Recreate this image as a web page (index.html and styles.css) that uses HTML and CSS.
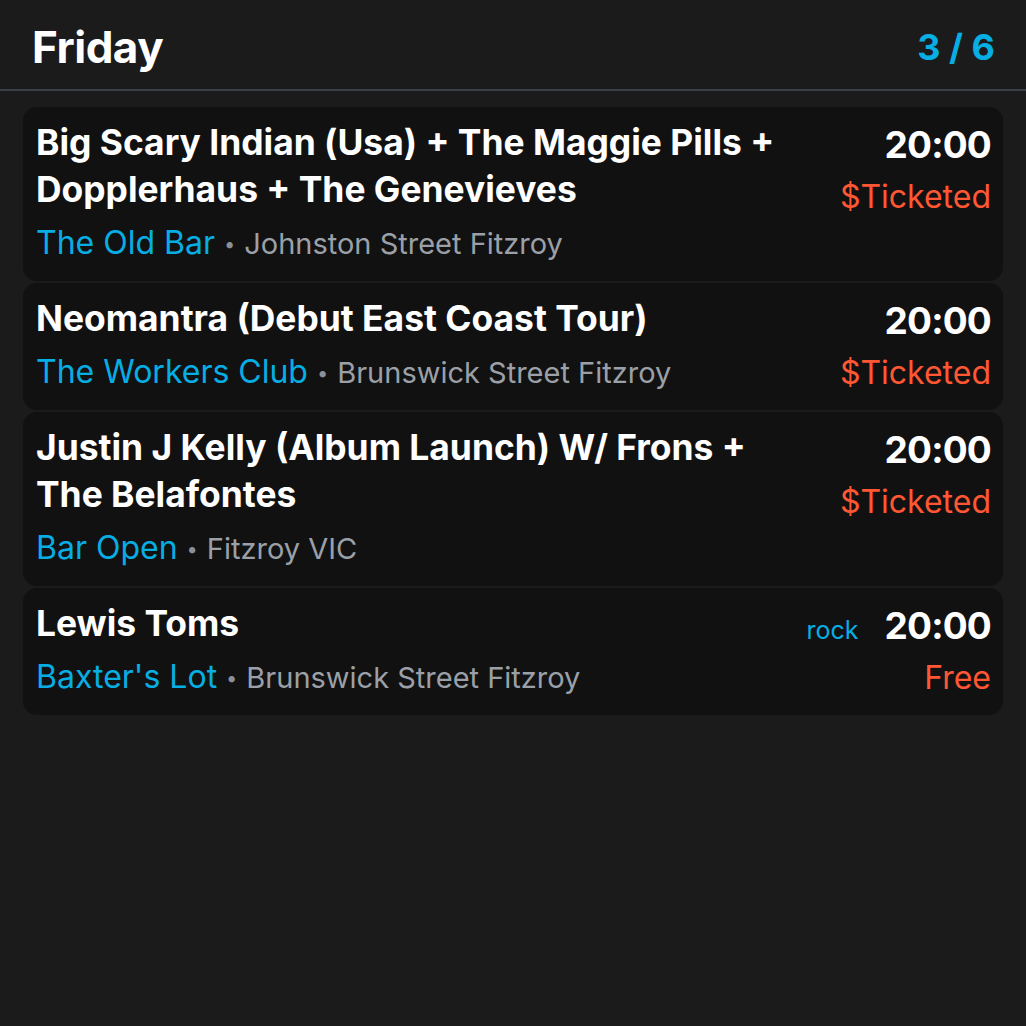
FILE: index.html
```html
<!DOCTYPE html>
<html lang="en">
<head>
<meta charset="utf-8">
<title>Friday</title>
<link rel="stylesheet" href="styles.css">
</head>
<body>
<div class="app">
  <header class="header">
    <h1 class="day">Friday</h1>
    <div class="count">3 / 6</div>
  </header>
  <main class="list">
    <article class="card">
      <div class="info">
        <div class="title">Big Scary Indian (Usa) + The Maggie Pills + Dopplerhaus + The Genevieves</div>
        <div class="place"><span class="venue">The Old Bar</span><span class="dot">•</span><span class="addr">Johnston Street Fitzroy</span></div>
      </div>
      <div class="meta">
        <div class="timerow"><span class="time">20:00</span></div>
        <div class="price">$Ticketed</div>
      </div>
    </article>
    <article class="card">
      <div class="info">
        <div class="title">Neomantra (Debut East Coast Tour)</div>
        <div class="place"><span class="venue">The Workers Club</span><span class="dot">•</span><span class="addr">Brunswick Street Fitzroy</span></div>
      </div>
      <div class="meta">
        <div class="timerow"><span class="time">20:00</span></div>
        <div class="price">$Ticketed</div>
      </div>
    </article>
    <article class="card">
      <div class="info">
        <div class="title">Justin J Kelly (Album Launch) W/ Frons + The Belafontes</div>
        <div class="place"><span class="venue">Bar Open</span><span class="dot">•</span><span class="addr">Fitzroy VIC</span></div>
      </div>
      <div class="meta">
        <div class="timerow"><span class="time">20:00</span></div>
        <div class="price">$Ticketed</div>
      </div>
    </article>
    <article class="card">
      <div class="info">
        <div class="title">Lewis Toms</div>
        <div class="place"><span class="venue">Baxter's Lot</span><span class="dot">•</span><span class="addr">Brunswick Street Fitzroy</span></div>
      </div>
      <div class="meta">
        <div class="timerow"><span class="tag">rock</span><span class="time">20:00</span></div>
        <div class="price">Free</div>
      </div>
    </article>
  </main>
</div>
</body>
</html>
```
FILE: styles.css
```css
* { box-sizing: border-box; }
html, body {
  margin: 0;
  padding: 0;
  background: #1b1b1b;
  color: #ffffff;
  font-family: Inter, "Noto Sans", "Liberation Sans", sans-serif;
}
.app {
  width: 1026px;
  min-height: 1026px;
}
.header {
  display: flex;
  align-items: center;
  justify-content: space-between;
  height: 91px;
  padding: 4px 31px 0 32px;
  border-bottom: 2px solid #393e49;
}
.day {
  margin: 0;
  font-size: 44px;
  font-weight: 700;
  letter-spacing: -0.5px;
}
.count {
  font-size: 36px;
  font-weight: 700;
  color: #06aee3;
}
.list {
  display: flex;
  flex-direction: column;
  gap: 2px;
  padding: 16px 23px;
}
.card {
  display: flex;
  justify-content: space-between;
  gap: 24px;
  background: #111111;
  border-radius: 14px;
  padding: 12px 12px 17px 13px;
}
.info {
  flex: 1;
  min-width: 0;
}
.title {
  font-size: 35.4px;
  font-weight: 700;
  line-height: 47px;
  max-width: 770px;
}
.place {
  margin-top: 9px;
  height: 42px;
  font-size: 32px;
  line-height: 42px;
  white-space: nowrap;
  overflow: visible;
}
.venue, .dot, .addr { line-height: 1; }
.venue { color: #06aee3; }
.dot {
  color: #8a8f98;
  font-size: 20px;
  margin: 0 9px;
  vertical-align: 3px;
}
.addr {
  color: #9ba0a8;
  font-size: 29px;
}
.meta {
  display: flex;
  flex-direction: column;
  align-items: flex-end;
  flex-shrink: 0;
}
.timerow {
  display: flex;
  align-items: baseline;
  gap: 26px;
  height: 51px;
  line-height: 51px;
}
.time {
  font-size: 37px;
  font-weight: 700;
  letter-spacing: -0.8px;
}
.tag {
  font-size: 25px;
  color: #06aee3;
}
.price {
  margin-top: 8px;
  font-size: 32px;
  line-height: 38px;
  color: #ff5733;
}
```
